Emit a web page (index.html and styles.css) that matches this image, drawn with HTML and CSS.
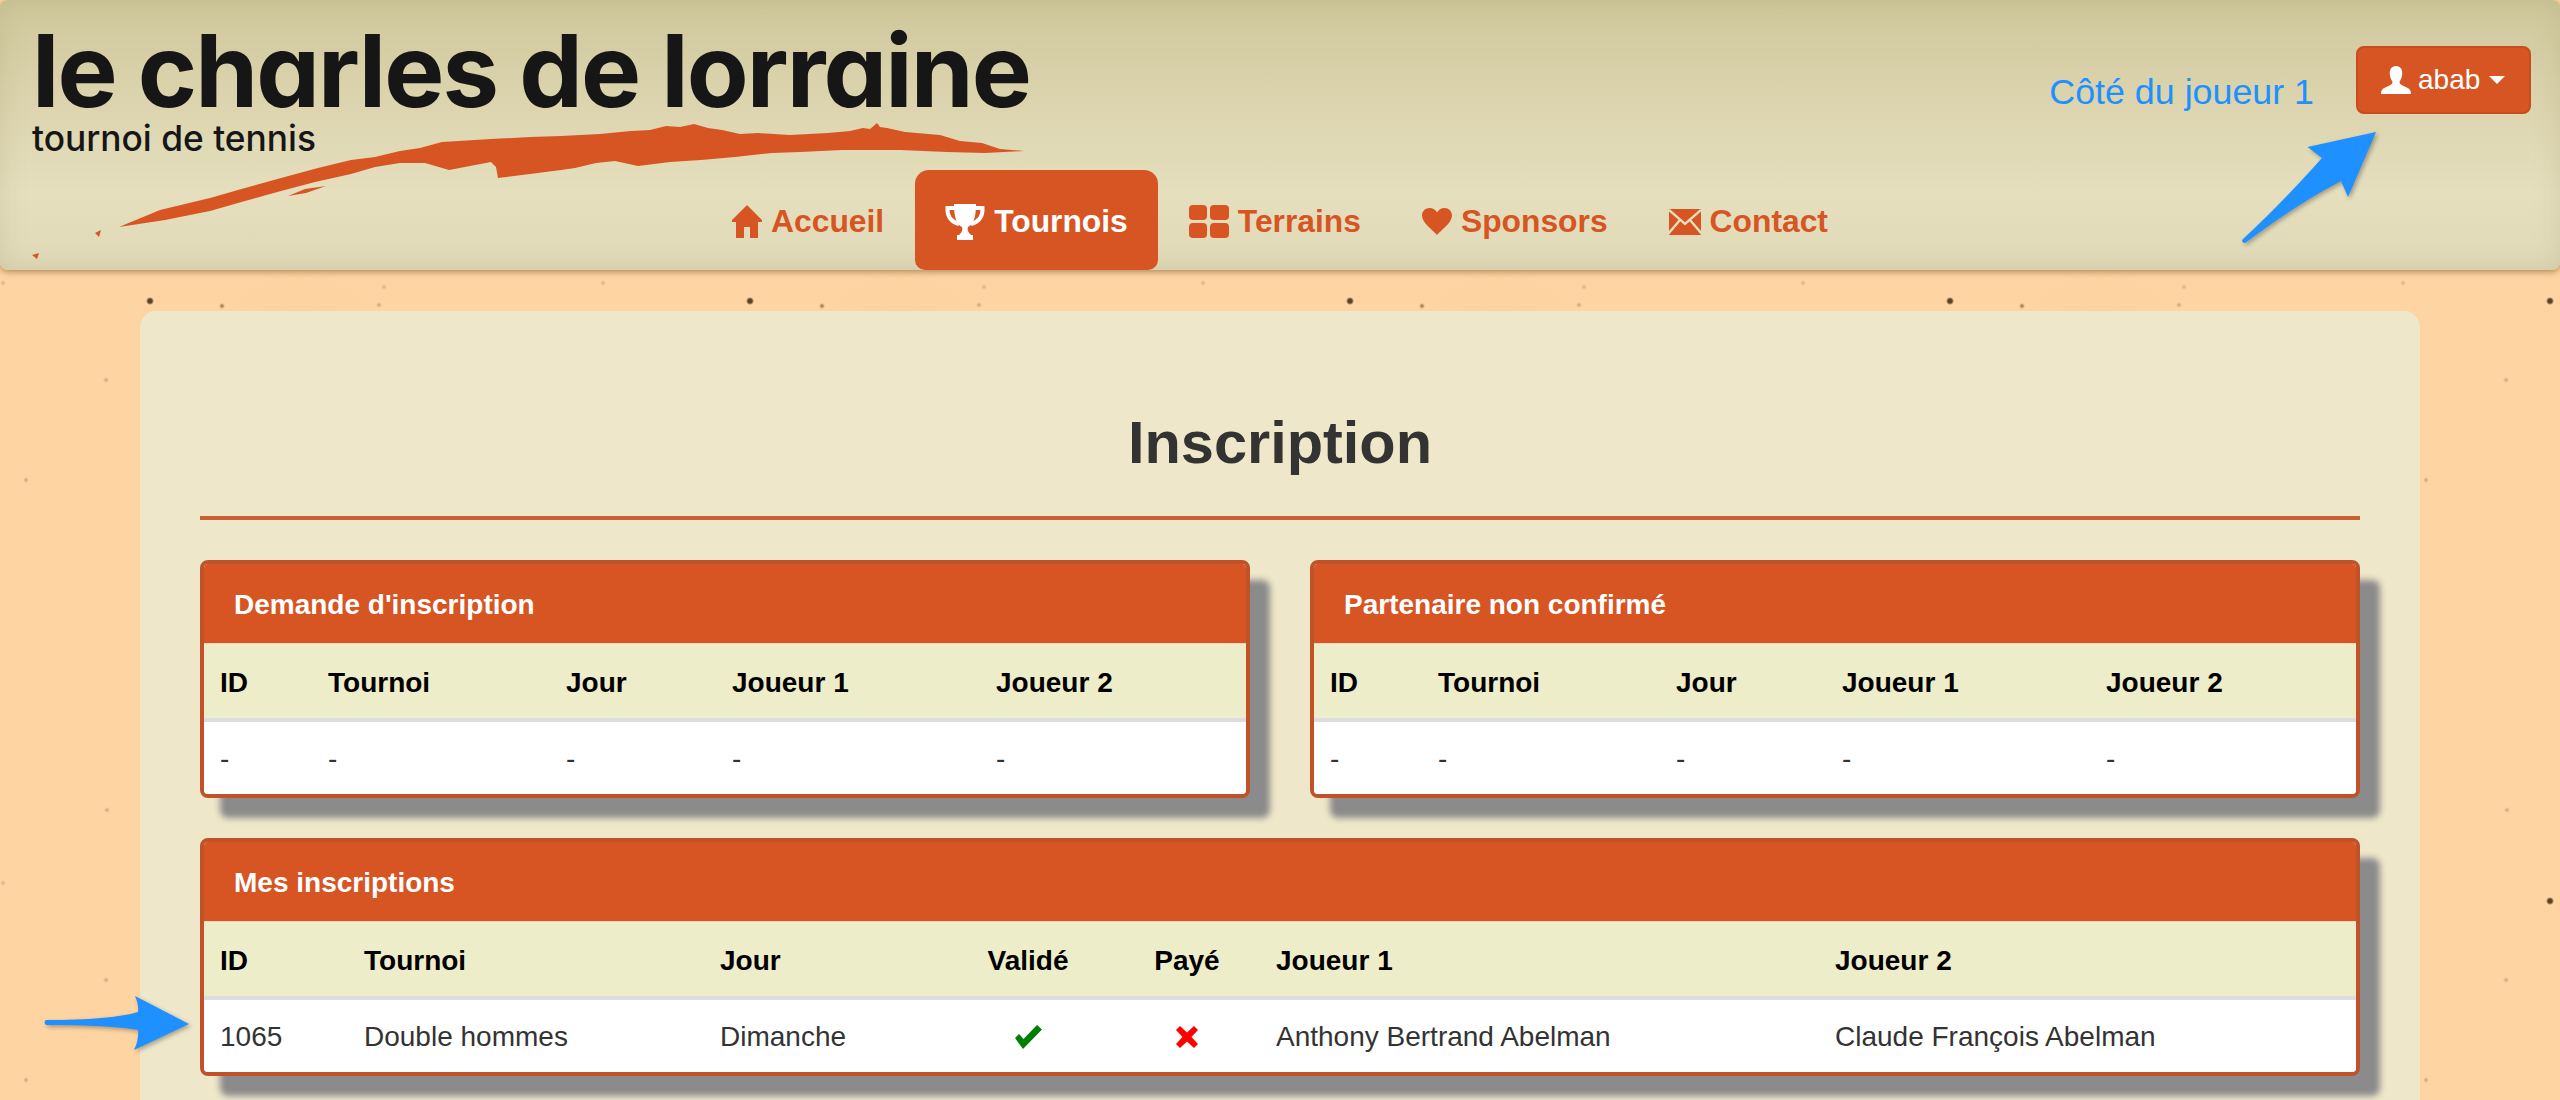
FILE: index.html
```html
<!DOCTYPE html>
<html lang="fr">
<head>
    <meta charset="UTF-8">
    <title>Inscription - le charles de lorraine</title>
    <link rel="stylesheet" href="styles.css">
</head>
<body>

    <header class="site-header">
        <div class="brand">
            <div class="brand-name">le charles de lorraine</div>
            <div class="brand-sub">tournoi de tennis</div>
        </div>

        <svg class="brand-stroke" width="1040" height="270" viewBox="0 0 1040 270">
            <path fill="#d65523" d="M119 227 L160 210 L210 198 L245 188 L281 178 L318 168 L351 160 L375 157 L400 151 L420 148 L442 142 L491 139 L530 137 L561 136 L600 134 L631 131 L650 130 L666 126 L680 127 L694 124 L708 128 L722 130 L740 134 L758 133 L790 135 L828 133 L850 131 L863 128 L870 129 L877 123 L880 127 L887 128 L905 132 L940 135 L960 141 L982 143 L1000 149 L1024 151 L985 153 L947 152 L900 150 L842 150 L800 152 L772 153 L735 157 L701 160 L670 162 L638 166 L615 161 L596 163 L575 168 L561 170 L530 174 L498 178 L496 167 L491 162 L470 166 L449 170 L425 163 L400 163 L375 167 L351 174 L315 182 L281 191 L245 201 L210 211 L165 220 Z"/>
            <path fill="#d65523" d="M288 196 L305 189 L326 186 L306 193 Z"/>
            <path fill="#d65523" d="M95 233 L101 230 L99 237 Z"/>
            <path fill="#d65523" d="M32 255 L39 253 L37 259 Z"/>
        </svg>

        <div class="account">
            <span class="account-note">Côté du joueur 1</span>
            <button class="account-btn">
                <svg width="30" height="28" viewBox="0 0 29 27"><path fill="#fff" d="M14.5 0 C19 0 21 4 20.5 8 C20.2 11 19 13.5 18 15 C17.5 17 19 18 22 19.5 C26 21 29 22 29 27 H0 C0 22 3 21 7 19.5 C10 18 11.5 17 11 15 C10 13.5 8.8 11 8.5 8 C8 4 10 0 14.5 0 Z"/></svg>
                abab
                <span class="caret"></span>
            </button>
        </div>

        <nav class="main-nav">
            <a href="#">
                <svg width="30" height="33" viewBox="0 0 30 33"><path fill="#d65523" d="M15 0 L30 15 V17 H26 V33 H18 V22 H12 V33 H4 V17 H0 V15 Z"/></svg>
                Accueil
            </a>
            <a href="#" class="active">
                <svg width="40" height="36" viewBox="0 0 40 36"><path fill="none" stroke="#fff" stroke-width="4" d="M10 4 H2.5 C2 12 6 18 14 20 M30 4 H37.5 C38 12 34 18 26 20"/><path fill="#fff" d="M9 0 H31 C31 12 29 20 23 23 C22 26 23 28 26 31 H28 V36 H12 V31 H14 C17 28 18 26 17 23 C11 20 9 12 9 0 Z"/></svg>
                Tournois
            </a>
            <a href="#">
                <svg width="40" height="33" viewBox="0 0 40 33"><rect x="0" y="0" width="18" height="15" rx="4" fill="#d65523"/><rect x="21" y="0" width="19" height="15" rx="4" fill="#d65523"/><rect x="0" y="18" width="18" height="15" rx="4" fill="#d65523"/><rect x="21" y="18" width="19" height="15" rx="4" fill="#d65523"/></svg>
                Terrains
            </a>
            <a href="#">
                <svg width="30" height="27" viewBox="0 0 30 27"><path fill="#d65523" d="M15 27 C11 22 0 15 0 7.5 C0 3 3.5 0 7.5 0 C11 0 13.5 2 15 4.5 C16.5 2 19 0 22.5 0 C26.5 0 30 3 30 7.5 C30 15 19 22 15 27 Z"/></svg>
                Sponsors
            </a>
            <a href="#">
                <svg width="32" height="26" viewBox="0 0 32 26"><rect width="32" height="26" fill="#d65523"/><path fill="none" stroke="#e5dfbd" stroke-width="2.4" d="M0 1 L16 15 L32 1 M-1 25 L11 11 M33 25 L21 11"/></svg>
                Contact
            </a>
        </nav>
    </header>

    <main class="content">
        <h1 class="page-title">Inscription</h1>

        <div class="panel-row">
            <section class="panel">
                <h2 class="panel-title">Demande d'inscription</h2>
                <table class="panel-table">
                    <colgroup>
                        <col class="w108"><col class="w238"><col class="w166"><col class="w264"><col>
                    </colgroup>
                    <thead>
                        <tr><th>ID</th><th>Tournoi</th><th>Jour</th><th>Joueur 1</th><th>Joueur 2</th></tr>
                    </thead>
                    <tbody>
                        <tr><td>-</td><td>-</td><td>-</td><td>-</td><td>-</td></tr>
                    </tbody>
                </table>
            </section>

            <section class="panel">
                <h2 class="panel-title">Partenaire non confirmé</h2>
                <table class="panel-table">
                    <colgroup>
                        <col class="w108"><col class="w238"><col class="w166"><col class="w264"><col>
                    </colgroup>
                    <thead>
                        <tr><th>ID</th><th>Tournoi</th><th>Jour</th><th>Joueur 1</th><th>Joueur 2</th></tr>
                    </thead>
                    <tbody>
                        <tr><td>-</td><td>-</td><td>-</td><td>-</td><td>-</td></tr>
                    </tbody>
                </table>
            </section>
        </div>

        <section class="panel">
            <h2 class="panel-title">Mes inscriptions</h2>
            <table class="panel-table">
                <colgroup>
                    <col class="w144"><col class="w356"><col class="w238"><col class="w172"><col class="w146"><col class="w559"><col>
                </colgroup>
                <thead>
                    <tr>
                        <th>ID</th><th>Tournoi</th><th>Jour</th>
                        <th class="center">Validé</th><th class="center">Payé</th>
                        <th>Joueur 1</th><th>Joueur 2</th>
                    </tr>
                </thead>
                <tbody>
                    <tr>
                        <td>1065</td>
                        <td>Double hommes</td>
                        <td>Dimanche</td>
                        <td class="center"><svg class="state" width="27" height="24" viewBox="0 0 27 24"><path fill="#008000" d="M0 13 L4 9 L8.5 14 L22 0 L27 4.5 L8 24 Z"/></svg></td>
                        <td class="center"><svg class="state" width="22" height="22" viewBox="0 0 22 22"><path fill="#f00" d="M4 0 L11 6.5 L18 0 L22 4 L15.5 11 L22 18 L18 22 L11 15.5 L4 22 L0 18 L6.5 11 L0 4 Z"/></svg></td>
                        <td>Anthony Bertrand Abelman</td>
                        <td>Claude François Abelman</td>
                    </tr>
                </tbody>
            </table>
        </section>
    </main>

    <!-- annotation arrows -->
    <svg class="arrow arrow-top" width="140" height="115" viewBox="0 0 140 115"><path fill="#1e90ff" d="M136 2 L67.5 17 L82 28 Q40 75 2 110 Q2 113 5 113 Q55 75 101 51 L108 67 Z"/></svg>
    <svg class="arrow arrow-left" width="155" height="65" viewBox="0 0 155 65"><path fill="#1e90ff" d="M149 34 L95 6 Q99 15 98 22 Q70 30 6 30 Q3 32 6 35 Q70 35 98 40 Q99 50 94 60 Z"/></svg>

</body>
</html>
```

FILE: styles.css
```css
body {
    margin: 0;
    height: 1100px;
    overflow: hidden;
    font-family: "Liberation Sans", Arial, sans-serif;
    color: #333;
    background-color: #fdd4a2;
    background-image:
        radial-gradient(circle at 150px 301px, #5e4426 0, #5e4426 2px, transparent 4px),
        radial-gradient(circle at 222px 306px, #8a6d48 0, transparent 3px),
        radial-gradient(circle at 379px 305px, #c4a67c 0, transparent 3px),
        radial-gradient(circle at 384px 287px, #d0b28a 0, transparent 3px),
        radial-gradient(circle at 3px 283px, #d0b28a 0, transparent 3px),
        radial-gradient(circle at 107px 210px, #c4a67c 0, transparent 3px),
        radial-gradient(circle at 106px 380px, #c4a67c 0, transparent 3px),
        radial-gradient(circle at 26px 480px, #c4a67c 0, transparent 3px),
        radial-gradient(ellipse at 300px 450px, rgba(245, 195, 145, 0.3) 0, transparent 120px);
    background-size: 600px 600px;
}

/* Header */
.site-header {
    display: grid;
    height: 270px;
    border-radius: 8px;
    background: linear-gradient(#cfc89c, #e6dfbe 72%, #e0d9b8);
    box-shadow: 0 2px 6px rgba(110, 80, 30, 0.55), inset 0 0 26px rgba(150, 140, 90, 0.22);
}

.brand, .brand-stroke, .account, .main-nav {
    grid-area: 1 / 1;
}

.brand {
    padding: 20px 0 0 32px;
    color: #161616;
}

.brand-name {
    font-family: Inter, "Liberation Sans", sans-serif;
    font-feature-settings: "cv11";
    font-size: 101px;
    font-weight: 650;
    line-height: 100px;
    letter-spacing: -1.9px;
    white-space: nowrap;
}

.brand-sub {
    font-family: Inter, "Liberation Sans", sans-serif;
    font-feature-settings: "cv11";
    font-size: 35.3px;
    font-weight: 500;
    line-height: 38px;
    white-space: nowrap;
}

.brand-stroke {
    align-self: start;
    justify-self: start;
}

.account {
    justify-self: end;
    align-self: start;
    display: flex;
    align-items: flex-start;
    gap: 42px;
    padding: 46px 29px 0 0;
}

.account-note {
    margin-top: 25px;
    font-size: 35.8px;
    line-height: 42px;
    color: #1e90ff;
}

.account-btn {
    display: flex;
    align-items: center;
    box-sizing: border-box;
    width: 175px;
    height: 68px;
    padding: 0 0 0 23px;
    border: 2px solid #c44e20;
    border-radius: 8px;
    background-color: #d65523;
    color: #fff;
    font-family: inherit;
    font-size: 28px;
    gap: 7px;
}

.caret {
    width: 0;
    height: 0;
    margin-left: 2px;
    border-top: 8px solid #fff;
    border-left: 8px solid transparent;
    border-right: 8px solid transparent;
}

.main-nav {
    align-self: end;
    justify-self: center;
    display: flex;
    gap: 1px;
}

.main-nav a {
    display: flex;
    align-items: center;
    gap: 9px;
    height: 100px;
    box-sizing: border-box;
    padding: 3px 30px 0;
    border-radius: 12px 12px 0 0;
    color: #d65523;
    font-size: 31.8px;
    font-weight: bold;
    text-decoration: none;
}

.main-nav a.active {
    background-color: #d65523;
    color: #fff;
    border-radius: 14px 14px 10px 10px;
}

/* Content card */
.content {
    box-sizing: border-box;
    width: 2280px;
    height: 789px;
    margin: 41px auto 0;
    padding: 99px 60px 0;
    border-radius: 16px 16px 0 0;
    background-color: #efe7c9;
}

.page-title {
    margin: 0 0 40px;
    padding-bottom: 40px;
    border-bottom: 4px solid #cb6035;
    font-size: 59.5px;
    line-height: 66px;
    font-weight: bold;
    text-align: center;
}

.panel-row {
    display: grid;
    grid-template-columns: 1fr 1fr;
    gap: 60px;
    margin-bottom: 40px;
}

.panel {
    border: 4px solid #bf5229;
    border-radius: 8px;
    overflow: hidden;
    background-color: #fff;
    box-shadow: 20px 20px 6px #8b8b8b;
}

.panel-title {
    box-sizing: border-box;
    height: 80px;
    margin: 0;
    padding: 3px 30px 0;
    border-bottom: 1px solid #f1d6bf;
    background-color: #d65523;
    color: #fff;
    font-size: 28px;
    line-height: 76px;
    font-weight: bold;
}

.panel-table {
    width: 100%;
    table-layout: fixed;
    border-collapse: separate;
    border-spacing: 0;
    font-size: 28px;
}

.panel-table th {
    box-sizing: border-box;
    height: 78px;
    padding: 3px 16px 0;
    border-bottom: 4px solid #ddd;
    background-color: #eeedc9;
    color: #000;
    font-weight: bold;
    text-align: left;
}

.panel-table td {
    box-sizing: border-box;
    height: 72px;
    padding: 2px 16px 0;
    background-color: #fff;
}

.panel-table .center {
    text-align: center;
}

.state {
    display: block;
    margin: 0 auto;
}

.w108 { width: 108px; }
.w144 { width: 144px; }
.w146 { width: 146px; }
.w166 { width: 166px; }
.w172 { width: 172px; }
.w238 { width: 238px; }
.w264 { width: 264px; }
.w356 { width: 356px; }
.w559 { width: 559px; }

/* Annotation arrows */
.arrow {
    position: absolute;
    filter: drop-shadow(2px 2px 2px rgba(0, 0, 0, 0.3));
}

.arrow-top {
    left: 2240px;
    top: 130px;
}

.arrow-left {
    left: 40px;
    top: 990px;
}
```
